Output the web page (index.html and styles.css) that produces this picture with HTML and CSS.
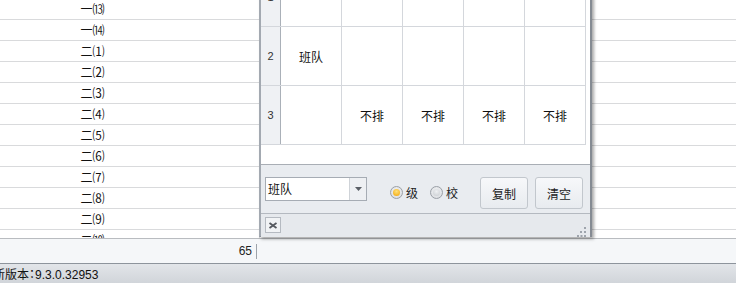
FILE: index.html
```html
<!DOCTYPE html>
<html>
<head>
<meta charset="utf-8">
<link rel="stylesheet" href="styles.css">
</head>
<body>
<div class="app">
  <div class="sheet">
    <div class="rows">
      <div class="row"><div class="c1">一⒀</div><div class="c2"></div></div>
      <div class="row"><div class="c1">一⒁</div><div class="c2"></div></div>
      <div class="row"><div class="c1">二⑴</div><div class="c2"></div></div>
      <div class="row"><div class="c1">二⑵</div><div class="c2"></div></div>
      <div class="row"><div class="c1">二⑶</div><div class="c2"></div></div>
      <div class="row"><div class="c1">二⑷</div><div class="c2"></div></div>
      <div class="row"><div class="c1">二⑸</div><div class="c2"></div></div>
      <div class="row"><div class="c1">二⑹</div><div class="c2"></div></div>
      <div class="row"><div class="c1">二⑺</div><div class="c2"></div></div>
      <div class="row"><div class="c1">二⑻</div><div class="c2"></div></div>
      <div class="row"><div class="c1">二⑼</div><div class="c2"></div></div>
      <div class="row"><div class="c1">二⑽</div><div class="c2"></div></div>
    </div>
  </div>
  <div class="footer">
    <div class="sum">65</div>
    <div class="sep"></div>
  </div>
  <div class="status">新版本<span class="colon">：</span>9.3.0.32953</div>

  <div class="dialog">
    <div class="table">
      <div class="trow">
        <div class="th">1</div>
        <div class="td"></div><div class="td"></div><div class="td"></div><div class="td"></div><div class="td"></div>
      </div>
      <div class="trow">
        <div class="th">2</div>
        <div class="td">班队</div><div class="td"></div><div class="td"></div><div class="td"></div><div class="td"></div>
      </div>
      <div class="trow">
        <div class="th">3</div>
        <div class="td"></div><div class="td">不排</div><div class="td">不排</div><div class="td">不排</div><div class="td">不排</div>
      </div>
    </div>
    <div class="panel">
      <div class="combo">
        <div class="combo-text">班队</div>
        <div class="combo-btn">
          <svg width="7" height="4" viewBox="0 0 7 4"><path d="M0 0H7L3.5 4Z" fill="#5a5f66"/></svg>
        </div>
      </div>
      <div class="radios">
        <label class="radio"><span class="dot on"></span><span>级</span></label>
        <label class="radio"><span class="dot"></span><span>校</span></label>
      </div>
      <div class="btn">复制</div>
      <div class="btn">清空</div>
    </div>
    <div class="bar">
      <div class="close">
        <svg width="10" height="7" viewBox="0 0 10 7"><path d="M1.5 1L8.5 6M8.5 1L1.5 6" stroke="#55595f" stroke-width="1.8"/></svg>
      </div>
      <svg class="grip" width="10" height="10" viewBox="0 0 10 10">
        <g fill="#9ea4ac">
          <rect x="7" y="0" width="2" height="2"/>
          <rect x="3" y="4" width="2" height="2"/><rect x="7" y="4" width="2" height="2"/>
          <rect x="0" y="8" width="2" height="2"/><rect x="3.5" y="8" width="2" height="2"/><rect x="7" y="8" width="2" height="2"/>
        </g>
      </svg>
    </div>
  </div>
</div>
</body>
</html>
```

FILE: styles.css
```css
html, body {
  margin: 0;
  padding: 0;
}
body {
  font-family: "Liberation Sans", "Noto Sans CJK SC", sans-serif;
  font-size: 12px;
  color: #1c1c1c;
  background: #ffffff;
}
.app {
  position: relative;
  width: 736px;
  height: 283px;
  overflow: hidden;
  display: flex;
  flex-direction: column;
}
.sheet {
  height: 238px;
  flex: none;
  overflow: hidden;
  background: #ffffff;
}
.rows {
  margin-top: -1px;
}
.row {
  display: flex;
  height: 20px;
  border-bottom: 1px solid #d9dadc;
}
.c1 {
  width: 185px;
  text-align: center;
  line-height: 20px;
  font-family: "Noto Sans CJK SC", sans-serif;
  font-size: 12px;
  color: #111;
}
.c2 {
  width: 74px;
  border-right: 1px solid #d9dadc;
}
.footer {
  flex: none;
  height: 24px;
  border-top: 1px solid #b9bcc0;
  border-bottom: 1px solid #8d949c;
  background: #f5f7f9;
  display: flex;
  align-items: center;
}
.sum {
  width: 252px;
  text-align: right;
  font-size: 12px;
  color: #222;
}
.sep {
  width: 1px;
  height: 15px;
  margin-left: 4px;
  background: #9da3aa;
}
.status {
  flex: 1;
  background: linear-gradient(#e2e5e9, #cfd3d8);
  line-height: 19px;
  margin-left: -7px;
  font-size: 12px;
  color: #111;
  white-space: nowrap;
}
.colon {
  display: inline-block;
  width: 6px;
  text-indent: -3px;
  font-family: "Noto Sans CJK TC", sans-serif;
}

/* floating dialog */
.dialog {
  position: absolute;
  left: 259px;
  top: -32px;
  width: 329px;
  height: 268px;
  border-left: 2px solid #a3a9b1;
  border-right: 2px solid #858b93;
  border-bottom: 1px solid #858b93;
  box-shadow: 2px 2px 3px rgba(0, 0, 0, 0.35);
  background: #ffffff;
  display: flex;
  flex-direction: column;
}
.table {
  flex: none;
  height: 196px;
  background: #ffffff;
}
.trow {
  display: flex;
  height: 58px;
  border-bottom: 1px solid #d4d7dc;
  width: 325px;
}
.th {
  width: 19px;
  flex: none;
  background: #eff1f4;
  border-right: 1px solid #aab0b8;
  display: flex;
  align-items: center;
  justify-content: center;
  font-size: 11px;
  color: #333;
}
.td {
  width: 60px;
  flex: none;
  border-right: 1px solid #d4d7dc;
  display: flex;
  align-items: center;
  justify-content: center;
  font-family: "Noto Sans CJK SC", sans-serif;
  font-size: 12px;
  color: #111;
}
.panel {
  flex: none;
  border-top: 1px solid #a9aeb5;
  border-bottom: 1px solid #b4b9c0;
  background: #e9ecf0;
  display: flex;
  align-items: flex-start;
  padding: 12px 0 0 4px;
  box-sizing: border-box;
  height: 50px;
  font-family: "Noto Sans CJK SC", sans-serif;
}
.combo {
  width: 102px;
  height: 24px;
  box-sizing: border-box;
  border: 1px solid #a6acb4;
  background: #ffffff;
  display: flex;
}
.combo-text {
  flex: 1;
  line-height: 22px;
  padding-left: 2px;
  font-size: 12px;
  color: #111;
}
.combo-btn {
  width: 16px;
  background: #eef0f3;
  border-left: 1px solid #cfd3d8;
  display: flex;
  align-items: center;
  justify-content: center;
}
.radios {
  display: flex;
  margin-left: 23px;
  margin-top: 8px;
  gap: 12px;
}
.radio {
  display: flex;
  align-items: center;
  gap: 3px;
  font-size: 12px;
  color: #222;
  line-height: 15px;
}
.dot {
  width: 13px;
  height: 13px;
  box-sizing: border-box;
  border-radius: 50%;
  border: 1px solid #9ba0a7;
  background: radial-gradient(circle at 50% 40%, #f4f5f7 0, #d4d7db 100%);
  display: flex;
  align-items: center;
  justify-content: center;
}
.dot::after {
  content: "";
  width: 7px;
  height: 7px;
  border-radius: 50%;
  background: radial-gradient(circle at 50% 35%, #eef0f2, #c7cbd0);
}
.dot.on::after {
  background: radial-gradient(circle at 50% 35%, #ffe07a, #f2a300);
}
.btn {
  width: 48px;
  height: 32px;
  box-sizing: border-box;
  border: 1px solid #c2c7cd;
  border-radius: 3px;
  background: linear-gradient(#f7f8fa, #e8ebef);
  display: flex;
  align-items: center;
  justify-content: center;
  font-size: 12px;
  color: #222;
}
.radios + .btn {
  margin-left: 22px;
}
.btn + .btn {
  margin-left: 7px;
}
.bar {
  flex: 1;
  background: #e6e9ed;
  display: flex;
  align-items: flex-start;
  justify-content: space-between;
  padding: 3px 2px 0 4px;
}
.close {
  width: 16px;
  height: 16px;
  box-sizing: border-box;
  border: 1px solid #b5bac1;
  background: #f1f3f5;
  display: flex;
  align-items: center;
  justify-content: center;
}
.grip {
  margin-top: 10px;
  margin-right: 1px;
}
```
